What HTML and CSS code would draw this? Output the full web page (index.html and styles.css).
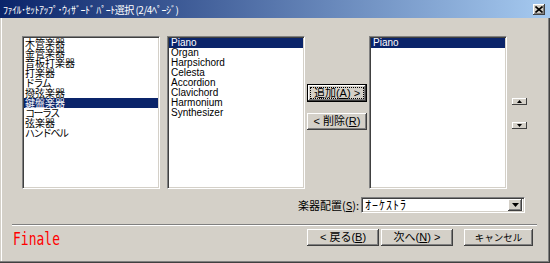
FILE: index.html
```html
<!DOCTYPE html>
<html lang="ja">
<head>
    <meta charset="UTF-8">
    <title>パート選択</title>
    <link rel="stylesheet" href="styles.css">
</head>
<body>
<div class="window">
    <div class="titlebar">
        <span class="title">ﾌｧｲﾙ･ｾｯﾄｱｯﾌﾟ･ｳｨｻﾞｰﾄﾞ ﾊﾟｰﾄ選択 (2/4ﾍﾟｰｼﾞ)</span>
        <span class="close">
            <svg width="8" height="7" viewBox="0 0 8 7"><path d="M0.5 0.5 L7.5 6.5 M7.5 0.5 L0.5 6.5" stroke="#000" stroke-width="1.6"/></svg>
        </span>
    </div>

    <div class="content">
        <div class="lists">
            <ul class="listbox groups">
                <li>木管楽器</li>
                <li>金管楽器</li>
                <li>音板打楽器</li>
                <li>打楽器</li>
                <li class="kana">ドラム</li>
                <li>撥弦楽器</li>
                <li class="selected">鍵盤楽器</li>
                <li class="kana">コーラス</li>
                <li>弦楽器</li>
                <li class="kana">ハンドベル</li>
            </ul>
            <ul class="listbox names">
                <li class="selected">Piano</li>
                <li>Organ</li>
                <li>Harpsichord</li>
                <li>Celesta</li>
                <li>Accordion</li>
                <li>Clavichord</li>
                <li>Harmonium</li>
                <li>Synthesizer</li>
            </ul>
            <div class="actions">
                <button class="btn default"><span class="focus">追加(<u>A</u>) &gt;</span></button>
                <button class="btn">&lt; 削除(<u>R</u>)</button>
            </div>
            <ul class="listbox names">
                <li class="selected">Piano</li>
            </ul>
            <div class="order">
                <button class="mini">
                    <svg width="5" height="3" viewBox="0 0 5 3"><path d="M2.5 0 L5 3 L0 3 Z" fill="#000"/></svg>
                </button>
                <button class="mini">
                    <svg width="5" height="3" viewBox="0 0 5 3"><path d="M0 0 L5 0 L2.5 3 Z" fill="#000"/></svg>
                </button>
            </div>
        </div>

        <div class="layout-row">
            <label class="label">楽器配置(<u>S</u>):</label>
            <div class="combo">
                <span class="combo-value">ｵｰｹｽﾄﾗ</span>
                <span class="combo-arrow">
                    <svg width="7" height="4" viewBox="0 0 7 4"><path d="M0 0 L7 0 L3.5 4 Z" fill="#000"/></svg>
                </span>
            </div>
        </div>

        <div class="separator"></div>

        <div class="footer">
            <span class="brand">Finale</span>
            <div class="nav-buttons">
                <button class="btn wide">&lt; 戻る(<u>B</u>)</button>
                <button class="btn wide">次へ(<u>N</u>) &gt;</button>
                <button class="btn cancel">キャンセル</button>
            </div>
        </div>
    </div>
</div>
</body>
</html>
```

FILE: styles.css
```css
* {
    margin: 0;
    padding: 0;
    box-sizing: border-box;
}
body {
    background: #d4d0c8;
    font-family: "Liberation Sans", "Noto Sans CJK JP", sans-serif;
    font-size: 11px;
    color: #000;
}
.window {
    width: 550px;
    height: 263px;
    background: #d4d0c8;
    box-shadow: inset -1px -1px #404040, inset -2px -2px #808080, inset 1px 0 #d4d0c8, inset 2px 0 #fff;
    overflow: hidden;
}

/* title bar */
.titlebar {
    height: 18px;
    display: flex;
    align-items: center;
    justify-content: space-between;
    padding: 0 5px 0 3px;
    background: linear-gradient(to right, #0a246a, #a6caf0);
}
.title {
    color: #fff;
    font-family: "Noto Sans CJK JP", sans-serif;
    font-size: 10px;
    line-height: 13px;
    letter-spacing: -0.5px;
}
.close {
    width: 12px;
    height: 11px;
    display: flex;
    align-items: center;
    justify-content: center;
    background: #d4d0c8;
    box-shadow: inset -1px -1px #404040, inset 1px 1px #fff, inset -2px -2px #808080;
}

.content {
    padding: 18px 0 0 22px;
}

/* list boxes */
.lists {
    display: flex;
    height: 153px;
}
.listbox {
    width: 138px;
    height: 153px;
    list-style: none;
    background: #fff;
    border: 1px solid;
    border-color: #808080 #fff #fff #808080;
    box-shadow: inset 1px 1px #404040, inset -1px -1px #d4d0c8;
    padding: 1px;
    overflow: hidden;
}
.listbox li {
    line-height: 10px;
    height: 10px;
    white-space: nowrap;
}
.listbox li.selected {
    background: #0a246a;
    color: #fff;
}
.groups {
    margin-right: 7px;
}
.groups li {
    font-family: "Noto Sans CJK JP", sans-serif;
    font-size: 10px;
    padding-left: 1px;
}
.groups li.kana {
    letter-spacing: -1.5px;
}
.names li {
    font-size: 10px;
    padding-left: 2px;
}

.actions {
    width: 64px;
    padding: 48px 0 0 2px;
    display: flex;
    flex-direction: column;
    gap: 11px;
}
.order {
    padding: 62px 0 0 5px;
    display: flex;
    flex-direction: column;
    gap: 17px;
}

/* buttons */
.btn {
    height: 17px;
    width: 60px;
    background: #d4d0c8;
    border: none;
    font-family: "Liberation Sans", "Noto Sans CJK JP", sans-serif;
    font-size: 11px;
    line-height: 13px;
    color: #000;
    box-shadow: inset -1px -1px #404040, inset 1px 1px #fff, inset -2px -2px #808080;
}
.btn.default {
    height: 18px;
    border: 1px solid #000;
    padding: 2px;
}
.btn .focus {
    display: block;
    height: 12px;
    line-height: 11px;
    border: 1px dotted #000;
}
.btn.wide {
    width: 72px;
}
.btn.cancel {
    width: 69px;
    margin-left: 9px;
    font-family: "Noto Sans CJK JP", sans-serif;
    font-size: 9.5px;
}
.mini {
    width: 15px;
    height: 7px;
    border: none;
    background: #d4d0c8;
    display: flex;
    align-items: center;
    justify-content: center;
    box-shadow: inset -1px -1px #404040, inset 1px 1px #fff;
}

/* layout combo */
.layout-row {
    margin-top: 8px;
    padding-right: 25px;
    display: flex;
    justify-content: flex-end;
    align-items: center;
}
.label {
    font-family: "Noto Sans CJK JP", sans-serif;
    font-size: 11px;
    margin-right: 2px;
}
.combo {
    width: 164px;
    height: 16px;
    display: flex;
    align-items: center;
    justify-content: space-between;
    background: #fff;
    border: 1px solid;
    border-color: #808080 #fff #fff #808080;
    box-shadow: inset 1px 1px #404040, inset -1px -1px #d4d0c8;
    padding: 1px 2px 1px 3px;
}
.combo-value {
    font-family: "Noto Sans CJK JP", sans-serif;
    font-size: 12px;
    line-height: 12px;
    letter-spacing: 1px;
}
.combo-arrow {
    width: 14px;
    height: 12px;
    display: flex;
    align-items: center;
    justify-content: center;
    background: #d4d0c8;
    box-shadow: inset -1px -1px #404040, inset 1px 1px #fff, inset -2px -2px #808080;
}

.separator {
    margin: 11px 0 0 -10px;
    width: 525px;
    height: 2px;
    border-top: 1px solid #808080;
    border-bottom: 1px solid #fff;
}

.footer {
    margin: 3px 0 0 -9px;
    padding-right: 17px;
    display: flex;
    align-items: flex-start;
    justify-content: space-between;
}
.brand {
    display: inline-block;
    color: #ff0000;
    font-family: "DejaVu Sans Mono", "Liberation Mono", monospace;
    font-size: 13px;
    line-height: 14px;
    transform: scaleY(1.35);
    transform-origin: top left;
    margin-top: 1px;
}
.nav-buttons {
    display: flex;
    gap: 2px;
}
```
